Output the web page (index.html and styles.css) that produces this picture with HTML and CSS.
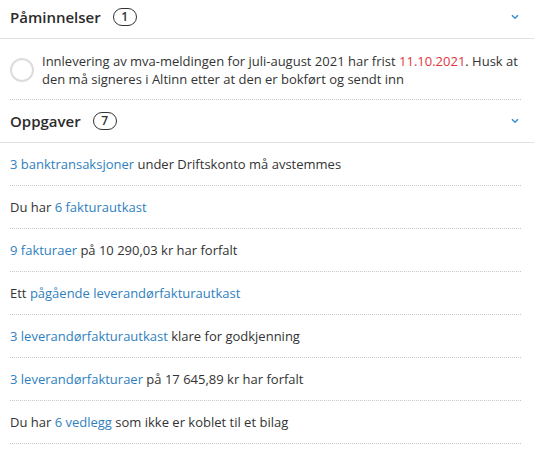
FILE: index.html
```html
<!DOCTYPE html>
<html lang="no">
<head>
<meta charset="utf-8">
<title>Oversikt</title>
<link rel="stylesheet" href="styles.css">
</head>
<body>
<section class="panel">
  <header class="panel-head first">
    <h2 class="panel-title">Påminnelser</h2>
    <span class="count">1</span>
    <svg class="chevron" width="8" height="6" viewBox="0 0 8 6"><path d="M1 1.2 L4 4.2 L7 1.2" fill="none" stroke="#3b8ed6" stroke-width="1.6"/></svg>
  </header>
  <div class="reminder">
    <span class="check"></span>
    <p class="reminder-text">Innlevering av mva-meldingen for juli-august 2021 har frist <span class="due">11.10.2021</span>. Husk at den må signeres i Altinn etter at den er bokført og sendt inn</p>
  </div>
</section>
<section class="panel">
  <header class="panel-head">
    <h2 class="panel-title">Oppgaver</h2>
    <span class="count">7</span>
    <svg class="chevron" width="8" height="6" viewBox="0 0 8 6"><path d="M1 1.2 L4 4.2 L7 1.2" fill="none" stroke="#3b8ed6" stroke-width="1.6"/></svg>
  </header>
  <ul class="tasks">
    <li class="task"><a class="link">3 banktransaksjoner</a> under Driftskonto må avstemmes</li>
    <li class="task">Du har <a class="link">6 fakturautkast</a></li>
    <li class="task"><a class="link">9 fakturaer</a> på 10 290,03 kr har forfalt</li>
    <li class="task">Ett <a class="link">pågående leverandørfakturautkast</a></li>
    <li class="task"><a class="link">3 leverandørfakturautkast</a> klare for godkjenning</li>
    <li class="task"><a class="link">3 leverandørfakturaer</a> på 17 645,89 kr har forfalt</li>
    <li class="task">Du har <a class="link">6 vedlegg</a> som ikke er koblet til et bilag</li>
  </ul>
</section>
</body>
</html>
```

FILE: styles.css
```css
html, body {
  margin: 0;
  padding: 0;
  background: #fff;
}
body {
  font-family: "Open Sans", "Noto Sans", sans-serif;
  font-size: 13px;
  color: #333;
  width: 534px;
}
.panel-head {
  display: flex;
  align-items: center;
  height: 43px;
  box-sizing: border-box;
  padding: 0 15px 1px 10px;
  border-bottom: 1px solid #e0e0e0;
}
.panel-head.first {
  height: 39px;
  padding-bottom: 5px;
}
.panel-title {
  margin: 0;
  font-size: 15px;
  font-weight: 600;
  line-height: 20px;
  color: #2b2b2b;
}
.count {
  margin-left: 12px;
  min-width: 24px;
  height: 18px;
  box-sizing: border-box;
  border: 1px solid #333;
  border-radius: 9px;
  font-size: 12px;
  line-height: 16px;
  text-align: center;
  font-weight: 600;
  color: #333;
}
.chevron {
  margin-left: auto;
}
.reminder {
  display: flex;
  align-items: center;
  gap: 8px;
  margin: 0 13px 0 10px;
  padding: 13px 0 11px;
  border-bottom: 1px dotted #c8c8c8;
}
.check {
  flex: none;
  width: 24px;
  height: 24px;
  box-sizing: border-box;
  border: 2px solid #dcdcdc;
  border-radius: 50%;
}
.reminder-text {
  margin: 0;
  line-height: 18px;
}
.due {
  color: #e0353f;
}
.tasks {
  list-style: none;
  margin: 0 13px 0 10px;
  padding: 0;
}
.task {
  padding: 12px 0;
  line-height: 18px;
  border-bottom: 1px dotted #c8c8c8;
}
.link {
  color: #2f7fc0;
  text-decoration: none;
}
```
